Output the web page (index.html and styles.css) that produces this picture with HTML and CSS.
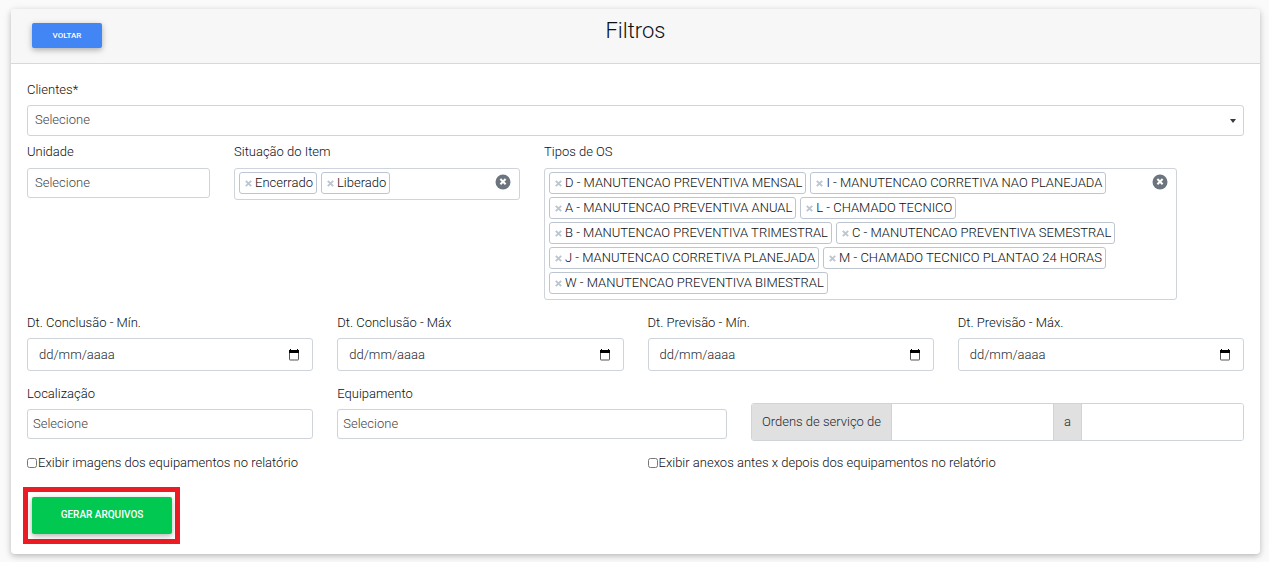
FILE: index.html
```html
<!DOCTYPE html>
<html lang="pt-BR">
<head>
<meta charset="utf-8">
<title>Filtros</title>
<link rel="stylesheet" href="styles.css">
</head>
<body>
<svg class="sprite" aria-hidden="true">
  <symbol id="calendar" viewBox="0 0 12 12"><path d="M2 0h1v1h6V0h1v1h1v3H1V1h1z"/><path d="M1.5 4v6.5q0 .5.5.5h8q.5 0 .5-.5V4" fill="none" stroke="#555"/></symbol>
  <symbol id="clear" viewBox="0 0 16 16"><circle cx="8" cy="8" r="7.5" fill="#6c757d"/><path d="M5.4 5l5.2 5.2M10.6 5l-5.2 5.2" stroke="#fff" stroke-width="2"/></symbol>
  <symbol id="remove" viewBox="0 0 7 7"><path d="M.8.8l5.4 5.4M6.2.8L.8 6.2" stroke="#bdc6d0" stroke-width="1.9"/></symbol>
</svg>
<form class="card">
  <header class="card-header">
    <button type="button" class="btn btn-back">VOLTAR</button>
    <h1 class="title">Filtros</h1>
  </header>
  <div class="card-body">
    <div class="field">
      <label for="clientes">Clientes*</label>
      <div class="select-wrap">
        <select id="clientes" class="control select"><option>Selecione</option></select>
        <svg class="caret" viewBox="0 0 6 4" aria-hidden="true"><path d="M0 0h6L3 4z"/></svg>
      </div>
    </div>

    <div class="row row-types">
      <div class="field">
        <label for="unidade">Unidade</label>
        <input id="unidade" class="control" type="text" placeholder="Selecione">
      </div>
      <div class="field">
        <span class="label" id="situacao">Situação do Item</span>
        <div class="tagbox" role="group" aria-labelledby="situacao">
          <ul class="tags">
            <li class="tag"><button type="button" class="remove" aria-label="Remover"><svg><use href="#remove"/></svg></button>Encerrado</li>
            <li class="tag"><button type="button" class="remove" aria-label="Remover"><svg><use href="#remove"/></svg></button>Liberado</li>
          </ul>
          <button type="button" class="clear" aria-label="Limpar"><svg><use href="#clear"/></svg></button>
        </div>
      </div>
      <div class="field">
        <span class="label" id="tipos">Tipos de OS</span>
        <div class="tagbox" role="group" aria-labelledby="tipos">
          <ul class="tags">
            <li class="tag"><button type="button" class="remove" aria-label="Remover"><svg><use href="#remove"/></svg></button>D - MANUTENCAO PREVENTIVA MENSAL</li>
            <li class="tag"><button type="button" class="remove" aria-label="Remover"><svg><use href="#remove"/></svg></button>I - MANUTENCAO CORRETIVA NAO PLANEJADA</li>
            <li class="tag"><button type="button" class="remove" aria-label="Remover"><svg><use href="#remove"/></svg></button>A - MANUTENCAO PREVENTIVA ANUAL</li>
            <li class="tag"><button type="button" class="remove" aria-label="Remover"><svg><use href="#remove"/></svg></button>L - CHAMADO TECNICO</li>
            <li class="tag"><button type="button" class="remove" aria-label="Remover"><svg><use href="#remove"/></svg></button>B - MANUTENCAO PREVENTIVA TRIMESTRAL</li>
            <li class="tag"><button type="button" class="remove" aria-label="Remover"><svg><use href="#remove"/></svg></button>C - MANUTENCAO PREVENTIVA SEMESTRAL</li>
            <li class="tag"><button type="button" class="remove" aria-label="Remover"><svg><use href="#remove"/></svg></button>J - MANUTENCAO CORRETIVA PLANEJADA</li>
            <li class="tag"><button type="button" class="remove" aria-label="Remover"><svg><use href="#remove"/></svg></button>M - CHAMADO TECNICO PLANTAO 24 HORAS</li>
            <li class="tag"><button type="button" class="remove" aria-label="Remover"><svg><use href="#remove"/></svg></button>W - MANUTENCAO PREVENTIVA BIMESTRAL</li>
          </ul>
          <button type="button" class="clear" aria-label="Limpar"><svg><use href="#clear"/></svg></button>
        </div>
      </div>
    </div>

    <div class="row row-grid">
      <div class="field span-3">
        <label for="conc-min">Dt. Conclusão - Mín.</label>
        <div class="date"><input id="conc-min" type="text" placeholder="dd/mm/aaaa"><button type="button" aria-label="Abrir calendário"><svg><use href="#calendar"/></svg></button></div>
      </div>
      <div class="field span-3">
        <label for="conc-max">Dt. Conclusão - Máx</label>
        <div class="date"><input id="conc-max" type="text" placeholder="dd/mm/aaaa"><button type="button" aria-label="Abrir calendário"><svg><use href="#calendar"/></svg></button></div>
      </div>
      <div class="field span-3">
        <label for="prev-min">Dt. Previsão - Mín.</label>
        <div class="date"><input id="prev-min" type="text" placeholder="dd/mm/aaaa"><button type="button" aria-label="Abrir calendário"><svg><use href="#calendar"/></svg></button></div>
      </div>
      <div class="field span-3">
        <label for="prev-max">Dt. Previsão - Máx.</label>
        <div class="date"><input id="prev-max" type="text" placeholder="dd/mm/aaaa"><button type="button" aria-label="Abrir calendário"><svg><use href="#calendar"/></svg></button></div>
      </div>
    </div>

    <div class="row row-grid">
      <div class="field span-3">
        <label for="local">Localização</label>
        <input id="local" class="control control-tight" type="text" placeholder="Selecione">
      </div>
      <div class="field span-4">
        <label for="equip">Equipamento</label>
        <input id="equip" class="control control-tight" type="text" placeholder="Selecione">
      </div>
      <div class="range span-5">
        <label for="os-de">Ordens de serviço de</label>
        <input id="os-de" type="text">
        <label for="os-a">a</label>
        <input id="os-a" type="text">
      </div>
    </div>

    <div class="row row-grid row-checks">
      <label class="check span-6"><input type="checkbox">Exibir imagens dos equipamentos no relatório</label>
      <label class="check span-6"><input type="checkbox">Exibir anexos antes x depois dos equipamentos no relatório</label>
    </div>

    <div class="highlight">
      <button type="submit" class="btn btn-submit">GERAR ARQUIVOS</button>
    </div>
  </div>
</form>
</body>
</html>
```
FILE: styles.css
```css
* { box-sizing: border-box; }
body {
  margin: 0;
  padding: 9px 9px 8px 11px;
  background: #fafafa;
  color: #0c0f12;
  font: 300 13px/20px Roboto, sans-serif;
}
button, input, select { font: inherit; color: inherit; margin: 0; }
button { cursor: pointer; }
.sprite { display: none; }

.card {
  background: #fff;
  border-radius: 4px;
  box-shadow: 0 2px 5px rgba(0, 0, 0, .16), 0 2px 10px rgba(0, 0, 0, .12);
}
.card-header {
  display: grid;
  grid-template-columns: 1fr auto 1fr;
  align-items: start;
  padding: 8px 21px 15px;
  background: #f7f7f7;
  border-bottom: 1px solid #d8d8d8;
  border-radius: 4px 4px 0 0;
}
.title { margin: 0; font-size: 22px; line-height: 28px; font-weight: 300; }
.btn {
  border: 0;
  border-radius: 2px;
  color: #fff;
  font-weight: 500;
  box-shadow: 0 2px 5px rgba(0, 0, 0, .2), 0 2px 8px rgba(0, 0, 0, .12);
}
.btn-back {
  justify-self: start;
  width: 70px;
  height: 25px;
  margin-top: 6px;
  padding: 0;
  background: #4285f4;
  font-size: 8px;
}
.btn-submit { width: 140px; height: 37px; padding: 0 0 2px; background: #00c851; font-size: 10px; }

.card-body { padding: 16px 16px 10px; }
.field { display: flex; flex-direction: column; gap: 5px; min-width: 0; }
.label { display: block; }
.row { display: grid; column-gap: 24px; align-items: start; margin-top: 13px; }
.row-types { grid-template-columns: 183fr 286fr 633fr 43fr; margin-top: 6px; }
.row-types .field { gap: 6px; }
.row-grid { grid-template-columns: repeat(12, 1fr); }
.row-checks { margin-top: 12px; }
.span-3 { grid-column: span 3; }
.span-4 { grid-column: span 4; }
.span-5 { grid-column: span 5; }
.span-6 { grid-column: span 6; }

.control {
  width: 100%;
  height: 30px;
  padding: 0 7px 2px;
  border: 1px solid #ced4da;
  border-radius: 3px;
  background: #fff;
}
.control-tight { padding: 0 5px 2px; }
::placeholder { color: #444; opacity: 1; }
.select-wrap { position: relative; }
.select { display: block; height: 31px; appearance: none; color: #444; }
.caret { position: absolute; right: 8px; top: 14px; width: 6px; height: 4px; fill: #343a40; pointer-events: none; }

.tagbox {
  display: flex;
  align-items: start;
  justify-content: space-between;
  padding: 3px 8px 5px 4px;
  border: 1px solid #ced4da;
  border-radius: 3px;
}
.tags { display: flex; flex-wrap: wrap; gap: 3px 4px; margin: 0; padding: 0; list-style: none; }
.tag {
  display: flex;
  align-items: center;
  height: 22px;
  padding: 0 3px 0 5px;
  border: 1px solid #bdc6d0;
  border-radius: 3px;
  white-space: nowrap;
}
.remove { display: flex; padding: 0; margin-right: 3px; border: 0; background: none; }
.remove svg { width: 7px; height: 7px; }
.clear { display: flex; margin-top: 2px; padding: 0; border: 0; background: none; }
.clear svg { width: 16px; height: 16px; }

.date {
  display: flex;
  align-items: center;
  height: 33px;
  padding: 0 12px 0 11px;
  border: 1px solid #ced4da;
  border-radius: 3px;
}
.date input { flex: 1; min-width: 0; padding: 0; border: 0; background: none; }
.date ::placeholder { color: #24292e; }
.date button { display: flex; padding: 0; border: 0; background: none; }
.date svg { width: 12px; height: 12px; }

.range {
  display: flex;
  height: 38px;
  margin-top: 19px;
  border: 1px solid #ced4da;
  border-radius: 3px;
  overflow: hidden;
}
.range label { padding: 8px 10px; background: #e0e0e0; color: #24292e; white-space: nowrap; }
.range input { flex: 1; min-width: 0; border: 0; border-left: 1px solid #ced4da; border-right: 1px solid #ced4da; }
.range input:last-child { border-right: 0; }

.check { display: flex; align-items: center; }
.check input { width: 10px; height: 10px; margin-right: 1px; }

.highlight { width: fit-content; margin: 14px 0 0 -4px; padding: 5px 3px 5px 4px; border: 5px solid #ed1c24; }
.highlight .btn { display: block; }
```
